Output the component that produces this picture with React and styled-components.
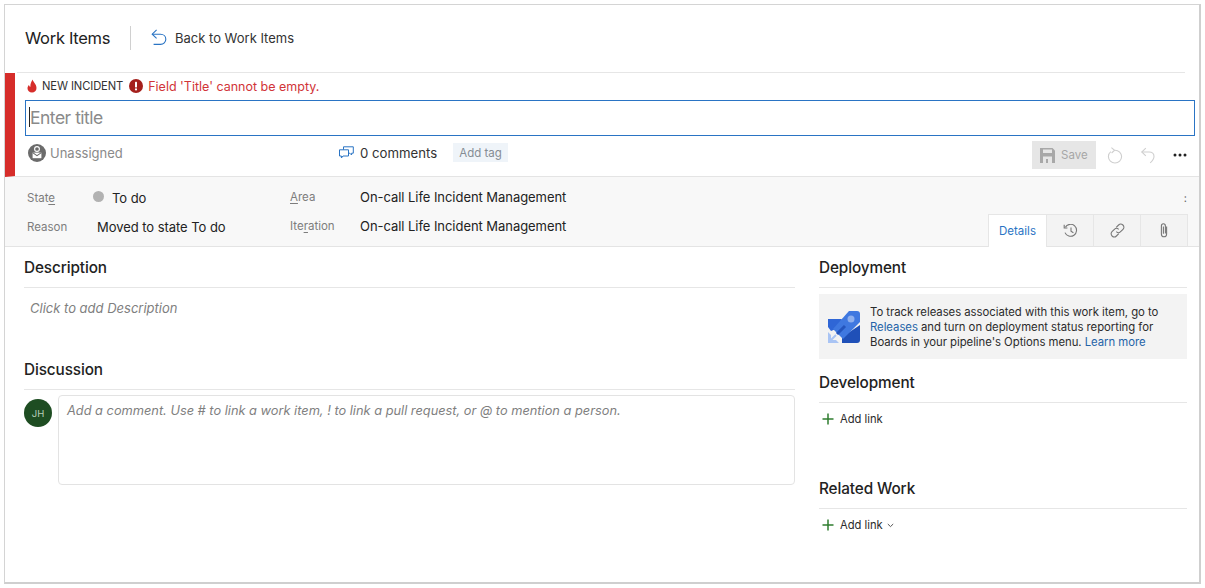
import { createGlobalStyle } from "styled-components";
import styled from "styled-components";

const GlobalStyle = createGlobalStyle`
  html, body {
    margin: 0;
    padding: 0;
    background: #fff;
  }
  body {
    font-family: Inter, "Liberation Sans", sans-serif;
    color: #1f1f1f;
  }
`;

const Page = styled.div`
  width: 1205px;
  height: 588px;
  padding: 4px;
  box-sizing: border-box;
  overflow: hidden;
`;

const Frame = styled.div`
  width: 1197px;
  height: 580px;
  box-sizing: border-box;
  border: 1px solid #d4d4d4;
  border-right: 2px solid #cfcfcf;
  border-bottom: 2px solid #cfcfcf;
  overflow: hidden;
`;

const Header = styled.div`
  height: 65px;
  padding: 0 0 2px 8px;
  margin: 0 14px 0 12px;
  display: flex;
  align-items: center;
  border-bottom: 1px solid #e6e6e6;
  box-sizing: content-box;
`;

const Title = styled.div`
  font-size: 16.5px;
  letter-spacing: -0.3px;
  color: #222;
  width: 105px;
`;

const Divider = styled.div`
  width: 1px;
  height: 24px;
  background: #d0d0d0;
  margin-right: 20px;
`;

const BackLink = styled.div`
  display: flex;
  align-items: center;
  gap: 8px;
  font-size: 13px;
  color: #333;
`;

const Incident = styled.div`
  height: 103px;
  border-left: 10px solid #d62d2a;
  padding-left: 10px;
  padding-right: 4px;
  border-bottom: 1px solid #e4e4e4;
`;

const BadgeRow = styled.div`
  height: 26px;
  margin-bottom: 1px;
  display: flex;
  align-items: center;
  padding-left: 1px;
`;

const TypeName = styled.span`
  font-size: 11.2px;
  letter-spacing: -0.1px;
  color: #333;
  margin: 0 6px 0 4px;
`;

const ErrorText = styled.span`
  font-size: 12.5px;
  color: #d13438;
  margin-left: 5px;
`;

const TitleInput = styled.div`
  height: 36px;
  box-sizing: border-box;
  border: 1px solid #2a74c4;
  display: flex;
  align-items: center;
  padding: 0 0 2px 3px;
  font-size: 17.5px;
  letter-spacing: -0.5px;
  color: #8a8a8a;
`;

const Caret = styled.span`
  width: 1px;
  height: 20px;
  background: #222;
`;

const MetaRow = styled.div`
  height: 33px;
  display: flex;
  align-items: center;
  padding-left: 3px;
`;

const Assignee = styled.div`
  width: 311px;
  display: flex;
  align-items: center;
  gap: 4px;
  font-size: 13px;
  color: #8a8a8a;
`;

const Comments = styled.div`
  display: flex;
  align-items: center;
  gap: 6px;
  font-size: 13.2px;
  color: #333;
`;

const Tag = styled.div`
  margin-left: 16px;
  height: 19px;
  padding: 0 6px;
  display: flex;
  align-items: center;
  background: #eff4f9;
  font-size: 11.5px;
  color: #858c94;
`;

const Actions = styled.div`
  margin: 5px 0 0 auto;
  display: flex;
  align-items: center;
  padding-right: 8px;
`;

const SaveButton = styled.div`
  width: 64px;
  height: 28px;
  background: #e6e6e6;
  display: flex;
  align-items: center;
  gap: 6px;
  padding-left: 8px;
  box-sizing: border-box;
  font-size: 11.5px;
  color: #a6a6a6;
`;

const ActionIcon = styled.div`
  display: flex;
  margin-left: ${(p) => p.$gap}px;
`;

const FieldBand = styled.div`
  height: 69px;
  background: #f8f8f8;
  border-bottom: 1px solid #e4e4e4;
  display: flex;
  position: relative;
  padding-left: 22px;
`;

const FieldColumn = styled.div`
  width: ${(p) => p.$width}px;
  padding-top: ${(p) => p.$top}px;
`;

const FieldRow = styled.div`
  height: 29px;
  display: flex;
  align-items: center;
`;

const FieldLabel = styled.div`
  width: ${(p) => p.$width}px;
  font-size: 11.5px;
  color: #7d7d7d;
  u {
    text-underline-offset: 2px;
  }
`;

const FieldValue = styled.div`
  font-size: 13px;
  letter-spacing: -0.05px;
  color: #222;
  display: flex;
  align-items: center;
  gap: 8px;
`;

const StateDot = styled.span`
  width: 11px;
  height: 11px;
  border-radius: 50%;
  background: #b2b2b2;
  margin-left: -4px;
  margin-top: -2px;
`;

const Kebab = styled.div`
  position: absolute;
  top: 14px;
  right: 12px;
  font-size: 11px;
  color: #666;
`;

const Tabs = styled.div`
  position: absolute;
  right: 11px;
  bottom: -1px;
  display: flex;
  height: 33px;
`;

const Tab = styled.div`
  width: ${(p) => p.$width}px;
  box-sizing: border-box;
  display: flex;
  align-items: center;
  justify-content: center;
  border: 1px solid #e6e6e6;
  border-left: ${(p) => (p.$active ? "1px solid #e6e6e6" : "none")};
  border-bottom: ${(p) => (p.$active ? "none" : "1px solid #e4e4e4")};
  background: ${(p) => (p.$active ? "#fff" : "#f3f3f3")};
  font-size: 11.5px;
  color: #2a74c4;
`;

const Body = styled.div`
  display: flex;
  padding-left: 19px;
`;

const LeftColumn = styled.div`
  width: 771px;
`;

const RightColumn = styled.div`
  width: 368px;
  margin-left: 24px;
`;

const SectionTitle = styled.div`
  height: ${(p) => p.$height || 41}px;
  box-sizing: border-box;
  border-bottom: 1px solid #e6e6e6;
  padding-top: ${(p) => p.$top || 11}px;
  font-size: 15.3px;
  font-weight: 500;
  letter-spacing: -0.1px;
  color: #222;
  line-height: 20px;
`;

const Placeholder = styled.div`
  font-size: 13px;
  font-style: italic;
  color: #7f7f7f;
  padding: 12px 6px 0;
  height: 49px;
`;

const CommentRow = styled.div`
  display: flex;
  gap: 6px;
  padding-top: 5px;
`;

const Avatar = styled.div`
  width: 28px;
  height: 28px;
  margin-top: 4px;
  border-radius: 50%;
  background: #1e4d22;
  color: #b9cdb9;
  font-size: 9.5px;
  display: flex;
  align-items: center;
  justify-content: center;
`;

const CommentBox = styled.div`
  flex: 1;
  height: 90px;
  box-sizing: border-box;
  border: 1px solid #e3e3e3;
  border-radius: 4px;
  padding: 7px 8px;
  font-size: 12.8px;
  font-style: italic;
  color: #7f7f7f;
`;

const Notice = styled.div`
  margin-top: 6px;
  height: 65px;
  box-sizing: border-box;
  padding: 2px 0 0 9px;
  background: #f3f3f3;
  display: flex;
  align-items: center;
  gap: 9px;
  font-size: 11.35px;
  line-height: 15px;
  letter-spacing: -0.04px;
  color: #2b2b2b;
  a {
    color: #2463a8;
    text-decoration: none;
  }
`;

const AddLink = styled.div`
  display: flex;
  align-items: center;
  gap: 6px;
  height: 20px;
  margin-top: 6px;
  padding-left: 3px;
  font-size: 11.2px;
  color: #2b2b2b;
  svg:nth-child(2) {
    margin-left: -2px;
  }
`;

const RelatedGap = styled.div`
  height: ${(p) => p.$height}px;
`;

function FlameIcon() {
  return (
    <svg width="12" height="14" viewBox="0 0 12 14">
      <path
        d="M6.6 0.5C7 3 10.5 5 10.5 9C10.5 11.8 8.5 13.5 6 13.5C3.4 13.5 1.5 11.8 1.5 9.3C1.5 7.8 2.2 6.6 3 5.9C3.2 7 3.7 7.6 4.4 7.8C4.2 5.2 5.2 2.6 6.6 0.5Z"
        fill="#d62d2a"
      />
    </svg>
  );
}

function ErrorIcon() {
  return (
    <svg width="14" height="14" viewBox="0 0 14 14">
      <circle cx="7" cy="7" r="7" fill="#a4201c" />
      <rect x="6" y="2.8" width="2" height="5.6" rx="0.6" fill="#fff" />
      <circle cx="7" cy="10.4" r="1.1" fill="#fff" />
    </svg>
  );
}

function BackIcon() {
  return (
    <svg width="16" height="17" viewBox="0 0 16 17" fill="none" stroke="#2a74c4" strokeWidth="1.1">
      <path d="M5.6 0.8L1.2 5.2L5.6 9.4" />
      <path d="M1.2 5.2H9.5C12.6 5.2 14.8 7.4 14.8 10.2C14.8 13 12.6 15.4 9.5 15.4H2.6" />
    </svg>
  );
}

function UnassignedIcon() {
  return (
    <svg width="18" height="18" viewBox="0 0 18 18">
      <circle cx="9" cy="9" r="9" fill="#6b6b6b" />
      <circle cx="9" cy="5" r="2.4" fill="none" stroke="#fff" strokeWidth="1.1" />
      <path d="M4.6 8.6H13.4V14.2H4.6Z" fill="#fff" />
      <path d="M4.6 8.6L9 11.6L13.4 8.6" fill="none" stroke="#6b6b6b" strokeWidth="1.1" />
    </svg>
  );
}

function CommentIcon() {
  return (
    <svg width="15" height="14" viewBox="0 0 15 14" fill="none" stroke="#2a74c4" strokeWidth="1">
      <path d="M0.5 3.8H9.5V10H4L2.4 12V10H0.5Z" />
      <path d="M4.5 3.6V0.8H14.3V7.2H12.6V9L10.8 7.2H9.6" />
    </svg>
  );
}

function SaveIcon() {
  return (
    <svg width="15" height="15" viewBox="0 0 15 15">
      <path d="M0 0H12.5L15 2.5V15H0Z" fill="#a8a8a8" />
      <rect x="3" y="1.5" width="9" height="3.5" fill="#e6e6e6" />
      <rect x="3" y="8.5" width="9" height="6.5" fill="#e6e6e6" />
      <rect x="6" y="11" width="2" height="4" fill="#a8a8a8" />
    </svg>
  );
}

function RefreshIcon() {
  return (
    <svg width="16" height="17" viewBox="0 0 16 17" fill="none" stroke="#cfcfcf" strokeWidth="1.1">
      <path d="M8 3.2C11.6 3.2 14.6 6.1 14.6 9.6C14.6 13.1 11.6 16 8 16C4.4 16 1.4 13.1 1.4 9.6C1.4 7.6 2.3 5.8 3.8 4.6" />
      <path d="M4.4 0.6L7.6 3.2L4.6 6" />
    </svg>
  );
}

function UndoIcon() {
  return (
    <svg width="14" height="17" viewBox="0 0 14 17" fill="none" stroke="#cfcfcf" strokeWidth="1.1">
      <path d="M4.8 1.2L0.8 5L4.8 8.8" />
      <path d="M0.8 5H8.2C11 5 13 6.9 13 9.4C13 11.6 11.6 13.6 9.2 15.8" />
    </svg>
  );
}

function MoreIcon() {
  return (
    <svg width="14" height="4" viewBox="0 0 14 4" fill="#222">
      <circle cx="2" cy="2" r="1.5" />
      <circle cx="7" cy="2" r="1.5" />
      <circle cx="12" cy="2" r="1.5" />
    </svg>
  );
}

function HistoryIcon() {
  return (
    <svg width="15" height="14" viewBox="0 0 15 14" fill="none" stroke="#777" strokeWidth="1.1">
      <path d="M2.4 3.2A6 6 0 1 1 2 8.6" />
      <path d="M1.2 0.8V4H4.4" />
      <path d="M8 3.6V7.2L10.4 8.8" />
    </svg>
  );
}

function LinkIcon() {
  return (
    <svg width="15" height="15" viewBox="0 0 15 15" fill="none" stroke="#777" strokeWidth="1.1">
      <path d="M6.2 4.4L8.6 2C9.8 0.8 11.6 0.8 12.9 2C14.2 3.3 14.2 5.1 13 6.3L10.6 8.7C9.4 9.9 7.6 9.9 6.3 8.7" />
      <path d="M8.8 10.6L6.4 13C5.2 14.2 3.4 14.2 2.1 13C0.8 11.7 0.8 9.9 2 8.7L4.4 6.3C5.6 5.1 7.4 5.1 8.7 6.3" />
    </svg>
  );
}

function AttachIcon() {
  return (
    <svg width="10" height="15" viewBox="0 0 10 15" fill="none" stroke="#777" strokeWidth="1.1">
      <path d="M7.6 3.4V11C7.6 12.6 6.4 13.8 5 13.8C3.6 13.8 2.4 12.6 2.4 11V3C2.4 1.8 3.2 0.8 4.4 0.8C5.6 0.8 6.4 1.8 6.4 3V10.6" />
      <path d="M4.4 3.6V10.8" />
    </svg>
  );
}

function PlusIcon() {
  return (
    <svg width="12" height="12" viewBox="0 0 12 12" stroke="#2f7d2f" strokeWidth="1.5">
      <path d="M6 0.5V11.5M0.5 6H11.5" />
    </svg>
  );
}

function ChevronIcon() {
  return (
    <svg width="7" height="5" viewBox="0 0 7 5" fill="none" stroke="#555" strokeWidth="1">
      <path d="M0.8 1L3.5 3.6L6.2 1" />
    </svg>
  );
}

function PipelineLogo() {
  return (
    <svg width="33" height="33" viewBox="0 0 33 33">
      <path d="M0 8H14L8 18L3 20L0 16Z" fill="#2f66d6" />
      <path d="M32 14V29Q32 32 29 32H14V26Z" fill="#1f50b8" />
      <path d="M21 0H29Q32 0 32 3V11L15 28L5 18Z" fill="#3f78e0" />
      <circle cx="23" cy="8" r="3.5" fill="#8fb0ee" />
      <path d="M17 15L9 23" stroke="#2455bd" strokeWidth="3" />
      <path d="M0 21L3 24V29H8L11 32H0Z" fill="#a9c4f4" />
      <path d="M3 29L8 24" stroke="#a9c4f4" strokeWidth="2" />
    </svg>
  );
}

export default function App() {
  return (
    <>
      <GlobalStyle />
      <Page>
        <Frame>
          <Header>
            <Title>Work Items</Title>
            <Divider />
            <BackLink>
              <BackIcon />
              Back to Work Items
            </BackLink>
          </Header>

          <Incident>
            <BadgeRow>
              <FlameIcon />
              <TypeName>NEW INCIDENT</TypeName>
              <ErrorIcon />
              <ErrorText>Field 'Title' cannot be empty.</ErrorText>
            </BadgeRow>
            <TitleInput>
              <Caret />
              Enter title
            </TitleInput>
            <MetaRow>
              <Assignee>
                <UnassignedIcon />
                Unassigned
              </Assignee>
              <Comments>
                <CommentIcon />0 comments
              </Comments>
              <Tag>Add tag</Tag>
              <Actions>
                <SaveButton>
                  <SaveIcon />
                  Save
                </SaveButton>
                <ActionIcon $gap={11}>
                  <RefreshIcon />
                </ActionIcon>
                <ActionIcon $gap={18}>
                  <UndoIcon />
                </ActionIcon>
                <ActionIcon $gap={18}>
                  <MoreIcon />
                </ActionIcon>
              </Actions>
            </MetaRow>
          </Incident>

          <FieldBand>
            <FieldColumn $width={263} $top={6}>
              <FieldRow>
                <FieldLabel $width={70}>
                  Stat<u>e</u>
                </FieldLabel>
                <FieldValue>
                  <StateDot />
                  To do
                </FieldValue>
              </FieldRow>
              <FieldRow>
                <FieldLabel $width={70}>Reason</FieldLabel>
                <FieldValue>Moved to state To do</FieldValue>
              </FieldRow>
            </FieldColumn>
            <FieldColumn $width={500} $top={5}>
              <FieldRow>
                <FieldLabel $width={70}>
                  <u>A</u>rea
                </FieldLabel>
                <FieldValue>On-call Life Incident Management</FieldValue>
              </FieldRow>
              <FieldRow>
                <FieldLabel $width={70}>
                  Ite<u>r</u>ation
                </FieldLabel>
                <FieldValue>On-call Life Incident Management</FieldValue>
              </FieldRow>
            </FieldColumn>
            <Kebab>:</Kebab>
            <Tabs>
              <Tab $active $width={59}>
                Details
              </Tab>
              <Tab $width={47}>
                <HistoryIcon />
              </Tab>
              <Tab $width={47}>
                <LinkIcon />
              </Tab>
              <Tab $width={47}>
                <AttachIcon />
              </Tab>
            </Tabs>
          </FieldBand>

          <Body>
            <LeftColumn>
              <SectionTitle>Description</SectionTitle>
              <Placeholder>Click to add Description</Placeholder>
              <SectionTitle>Discussion</SectionTitle>
              <CommentRow>
                <Avatar>JH</Avatar>
                <CommentBox>Add a comment. Use # to link a work item, ! to link a pull request, or @ to mention a person.</CommentBox>
              </CommentRow>
            </LeftColumn>
            <RightColumn>
              <SectionTitle>Deployment</SectionTitle>
              <Notice>
                <PipelineLogo />
                <div>
                  To track releases associated with this work item, go to
                  <br />
                  <a href="#releases">Releases</a> and turn on deployment status reporting for
                  <br />
                  Boards in your pipeline's Options menu. <a href="#learn">Learn more</a>
                </div>
              </Notice>
              <SectionTitle $height={44} $top={14}>
                Development
              </SectionTitle>
              <AddLink>
                <PlusIcon />
                Add link
              </AddLink>
              <RelatedGap $height={39} />
              <SectionTitle>Related Work</SectionTitle>
              <AddLink>
                <PlusIcon />
                Add link
                <ChevronIcon />
              </AddLink>
            </RightColumn>
          </Body>
        </Frame>
      </Page>
    </>
  );
}
